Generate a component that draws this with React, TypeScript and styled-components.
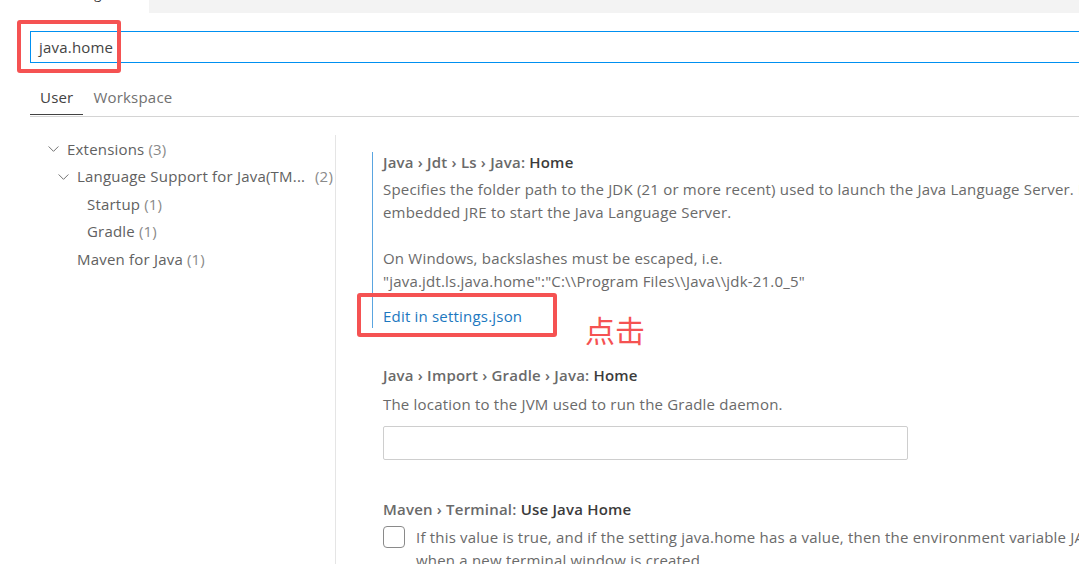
import React from 'react';
import styled, { createGlobalStyle } from 'styled-components';

const GlobalStyle = createGlobalStyle`
  html, body {
    margin: 0;
    padding: 0;
    background: #ffffff;
    overflow: hidden;
  }
  body {
    font-family: "Open Sans", "Noto Sans", "Noto Sans CJK SC", sans-serif;
    color: #616161;
    letter-spacing: 0.2px;
  }
`;

const Page = styled.div`
  position: relative;
  width: 1079px;
  height: 564px;
  overflow: hidden;
`;

const TabStrip = styled.div`
  display: flex;
  height: 13px;
  background: #f3f3f3;
`;

const EditorTab = styled.div`
  width: 149px;
  background: #ffffff;
  overflow: hidden;
  font-size: 13px;
  color: #333;
  padding-left: 58px;
  box-sizing: border-box;
  line-height: 18px;

  span {
    display: block;
    margin-top: -15px;
  }
`;

const Header = styled.div`
  padding-left: 30px;
`;

const SearchBox = styled.div`
  margin-top: 18px;
  height: 32px;
  box-sizing: border-box;
  border: 1px solid #0090f1;
  margin-right: -10px;
  display: flex;
  align-items: center;
  padding-left: 8px;
  font-size: 15px;
  color: #444;
`;

const ScopeTabs = styled.div`
  margin-top: 19px;
  display: flex;
  border-bottom: 1px solid #d4d4d4;
  height: 35px;
  box-sizing: border-box;
`;

const ScopeTab = styled.div<{ active?: boolean }>`
  padding: 0 10px;
  font-size: 15px;
  line-height: 31px;
  color: ${p => (p.active ? '#424242' : '#717171')};
  border-bottom: 1px solid ${p => (p.active ? '#424242' : 'transparent')};
  height: 33px;
  box-sizing: border-box;
`;

const Body = styled.div`
  display: grid;
  grid-template-columns: 335px 1px 1fr;
  margin-top: 18px;
  height: 430px;
`;

const Tree = styled.div`
  padding-top: 0;
`;

const TreeRow = styled.div<{ depth: number }>`
  display: flex;
  align-items: center;
  height: 27.5px;
  padding-left: ${p => 47 + p.depth * 10}px;
  font-size: 15px;
  color: #616161;
  white-space: nowrap;
`;

const Chevron = styled.svg`
  width: 13px;
  height: 13px;
  margin-right: 7px;
  flex: none;
`;

const Spacer = styled.span`
  width: 20px;
  flex: none;
`;

const Count = styled.span`
  color: #8a8a8a;
  margin-left: 4px;
`;

const Label = styled.span<{ wide?: boolean }>`
  display: inline-block;
  width: ${p => (p.wide ? '234px' : 'auto')};
`;

const Divider = styled.div`
  background: #e5e5e5;
`;

const Content = styled.div`
  padding-left: 36px;
  padding-top: 17px;
`;

const Setting = styled.div<{ focused?: boolean; gapAfter: number }>`
  border-left: 1px solid ${p => (p.focused ? '#5aa5e0' : 'transparent')};
  padding-left: 10px;
  padding-bottom: 2px;
  margin-bottom: ${p => p.gapAfter}px;
  white-space: nowrap;
`;

const Title = styled.div`
  font-size: 15px;
  font-weight: 600;
  color: #6a6a6a;
  line-height: 20px;

  b {
    color: #3b3b3b;
    font-weight: 600;
  }
`;

const Description = styled.div<{ top: number }>`
  margin-top: ${p => p.top}px;
  font-size: 15px;
  line-height: 23px;
  color: #6a6a6a;
`;

const Gap = styled.div<{ h: number }>`
  height: ${p => p.h}px;
`;

const Link = styled.div`
  margin-top: 13px;
  font-size: 15px;
  line-height: 20px;
  color: #1c78c0;
`;

const TextInput = styled.div`
  margin-top: 10px;
  width: 525px;
  height: 34px;
  box-sizing: border-box;
  border: 1px solid #cecece;
  border-radius: 2px;
`;

const CheckRow = styled.div`
  display: flex;
  align-items: flex-start;
  margin-top: 7px;
`;

const CheckBox = styled.div`
  width: 22px;
  height: 22px;
  box-sizing: border-box;
  border: 1px solid #8a8a8a;
  border-radius: 4px;
  flex: none;
  margin-right: 11px;
`;

const CheckText = styled.div`
  font-size: 15px;
  line-height: 23px;
  color: #6a6a6a;
`;

const Annotation = styled.div<{ x: number; y: number; w: number; h: number }>`
  position: absolute;
  left: ${p => p.x}px;
  top: ${p => p.y}px;
  width: ${p => p.w}px;
  height: ${p => p.h}px;
  box-sizing: border-box;
  border: 4px solid #f55252;
  border-radius: 3px;
  pointer-events: none;
`;

const Callout = styled.div`
  position: absolute;
  left: 585px;
  top: 311px;
  font-family: "Noto Sans CJK SC", sans-serif;
  font-size: 30px;
  line-height: 36px;
  letter-spacing: 0;
  color: #f55252;
`;

const Down = () => (
  <Chevron viewBox="0 0 16 16">
    <path d="M2 5.5 L8 11.5 L14 5.5" fill="none" stroke="#616161" strokeWidth="1.1" />
  </Chevron>
);

const windowsExample = '"java.jdt.ls.java.home":"C:\\\\Program Files\\\\Java\\\\jdk-21.0_5"';

export default function App() {
  return (
    <Page>
      <GlobalStyle />
      <TabStrip>
        <EditorTab>
          <span>Settings</span>
        </EditorTab>
      </TabStrip>
      <Header>
        <SearchBox>java.home</SearchBox>
        <ScopeTabs>
          <ScopeTab active>User</ScopeTab>
          <ScopeTab>Workspace</ScopeTab>
        </ScopeTabs>
      </Header>
      <Body>
        <Tree>
          <TreeRow depth={0}>
            <Down />
            Extensions<Count>(3)</Count>
          </TreeRow>
          <TreeRow depth={1}>
            <Down />
            <Label wide>Language Support for Java(TM...</Label>
            <Count>(2)</Count>
          </TreeRow>
          <TreeRow depth={2}>
            <Spacer />
            Startup<Count>(1)</Count>
          </TreeRow>
          <TreeRow depth={2}>
            <Spacer />
            Gradle<Count>(1)</Count>
          </TreeRow>
          <TreeRow depth={1}>
            <Spacer />
            Maven for Java<Count>(1)</Count>
          </TreeRow>
        </Tree>
        <Divider />
        <Content>
          <Setting focused gapAfter={37}>
            <Title>
              Java › Jdt › Ls › Java: <b>Home</b>
            </Title>
            <Description top={6}>
              Specifies the folder path to the JDK (21 or more recent) used to launch the Java Language Server. If not set, falls back to the
              <br />
              embedded JRE to start the Java Language Server.
              <Gap h={23} />
              On Windows, backslashes must be escaped, i.e.
              <br />
              {windowsExample}
            </Description>
            <Link>Edit in settings.json</Link>
          </Setting>
          <Setting gapAfter={37}>
            <Title>
              Java › Import › Gradle › Java: <b>Home</b>
            </Title>
            <Description top={8}>The location to the JVM used to run the Gradle daemon.</Description>
            <TextInput />
          </Setting>
          <Setting gapAfter={0}>
            <Title>
              Maven › Terminal: <b>Use Java Home</b>
            </Title>
            <CheckRow>
              <CheckBox />
              <CheckText>
                If this value is true, and if the setting java.home has a value, then the environment variable JAVA_HOME will be set
                <br />
                when a new terminal window is created.
              </CheckText>
            </CheckRow>
          </Setting>
        </Content>
      </Body>
      <Annotation x={17} y={20} w={104} h={53} />
      <Annotation x={357} y={293} w={200} h={44} />
      <Callout>点击</Callout>
    </Page>
  );
}
